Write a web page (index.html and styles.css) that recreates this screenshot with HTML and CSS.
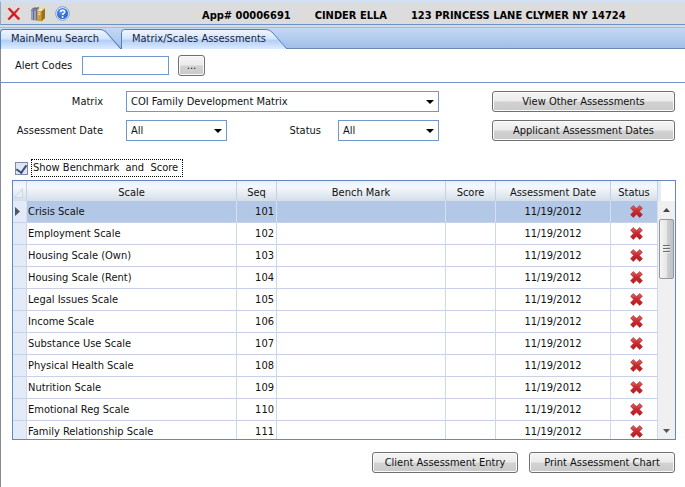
FILE: index.html
```html
<!DOCTYPE html>
<html lang="en">
<head>
<meta charset="utf-8">
<title>Matrix/Scales Assessments</title>
<link rel="stylesheet" href="styles.css">
</head>
<body>
<svg class="defs" width="0" height="0" aria-hidden="true">
  <defs>
    <linearGradient id="tabFill" x1="0" y1="0" x2="0" y2="1"><stop offset="0" stop-color="#f0f6ff"/><stop offset=".48" stop-color="#d3e4fb"/><stop offset=".55" stop-color="#b3cff5"/><stop offset="1" stop-color="#dcebff"/></linearGradient>
    <linearGradient id="crossFill" x1="0" y1="0" x2="0" y2="1"><stop offset="0" stop-color="#e46a6a"/><stop offset=".45" stop-color="#c92a2e"/><stop offset="1" stop-color="#b81a20"/></linearGradient>
    <radialGradient id="helpFill" cx=".4" cy=".3" r=".8"><stop offset="0" stop-color="#5d9bf5"/><stop offset="1" stop-color="#1b56c6"/></radialGradient>
    <symbol id="cross" viewBox="0 0 13 13"><path d="M3.2.6 6.5 3.6 9.8.6 12.3 3.2 9.3 6.4 12.4 9.7 9.8 12.4 6.5 9.3 3.2 12.4.6 9.7 3.7 6.4.7 3.2Z" fill="url(#crossFill)" stroke="#a92a2e" stroke-width=".7" stroke-linejoin="round"/></symbol>
  </defs>
</svg>
<header class="toolbar">
  <div class="tools">
    <button class="tool" aria-label="Close"><svg width="14" height="14" viewBox="0 0 14 14"><path d="M1 1.8 2.6 1 7 5.4 11.3 1 12.4 1.6 8.2 6.7 12.9 11.6 11.4 12.9 6.9 8.3 2 13 .9 11.8 5.4 6.8Z" fill="#d8141c" stroke="#d8141c" stroke-width=".5"/></svg></button>
    <button class="tool" aria-label="Records"><svg width="16" height="16" viewBox="0 0 16 16"><path d="M1 4 4 1 9 1 9 4 9 15 1 14Z" fill="#9a9bc0"/><path d="M1 4 6 4 9 1M3.5 4V14M6.5 4V14M2.5 2.5H8" fill="none" stroke="#65668f" stroke-width=".9"/><path d="M7 5 10.5 2 15 2.4 15 12 11.5 15.2 7 15Z" fill="#c99d38"/><path d="M7 5 10.5 2 15 2.4 11.5 5.3Z" fill="#f2e6a9"/><path d="M11.5 5.3 15 2.4V12L11.5 15.2Z" fill="#98701f"/><path d="M8.3 6.8H10.3M8.3 8.5H10.3" stroke="#f8e9a8"/></svg></button>
    <button class="tool" aria-label="Help"><svg width="15" height="15" viewBox="0 0 15 15"><circle cx="7.5" cy="7.5" r="6.8" fill="#f1f6ff" stroke="#5c8bd8" stroke-width=".8"/><circle cx="7.5" cy="7.5" r="5.6" fill="url(#helpFill)"/><path d="M5.5 6.1C5.5 3.5 9.7 3.5 9.7 6 9.7 7.5 7.6 7.4 7.6 9.1" fill="none" stroke="#fff" stroke-width="1.5"/><circle cx="7.6" cy="11" r=".95" fill="#fff"/></svg></button>
  </div>
  <div class="client"><span>App# 00006691</span><span>CINDER ELLA</span><span>123 PRINCESS LANE CLYMER NY 14724</span></div>
</header>
<nav class="tabs">
  <a class="tab tab-first" href="#"><svg viewBox="0 0 120 20" preserveAspectRatio="none" aria-hidden="true"><path d="M.5 20V3.5Q.5.5 3.5.5H99Q103 .5 106 4L120 20" fill="url(#tabFill)" stroke="#5080b8"/></svg><span>MainMenu Search</span></a>
  <a class="tab tab-second" href="#"><svg viewBox="0 0 166 20" preserveAspectRatio="none" aria-hidden="true"><path d="M.5 20V3.5Q.5.5 3.5.5H145Q149 .5 152 4L166 20" fill="url(#tabFill)" stroke="#5080b8"/></svg><span>Matrix/Scales Assessments</span></a>
</nav>
<main>
  <section class="alerts">
    <label for="alert">Alert Codes</label>
    <input id="alert" class="textbox" type="text">
    <button class="btn btn-more" aria-label="Browse alert codes">...</button>
  </section>
  <section class="filters">
    <label for="matrix">Matrix</label>
    <span class="combo combo-wide"><select id="matrix"><option>COI Family Development Matrix</option></select></span>
    <button class="btn view">View Other Assessments</button>
    <label for="date">Assessment Date</label>
    <span class="combo"><select id="date"><option>All</option></select></span>
    <label class="status-label" for="status">Status</label>
    <span class="combo"><select id="status"><option>All</option></select></span>
    <button class="btn view">Applicant Assessment Dates</button>
  </section>
  <div class="check">
    <input id="show" type="checkbox" checked>
    <label for="show">Show Benchmark&nbsp; and&nbsp; Score</label>
  </div>
  <section class="grid">
    <div class="viewport">
      <table>
        <colgroup><col class="c-mark"><col class="c-scale"><col class="c-seq"><col><col class="c-score"><col class="c-date"><col class="c-status"></colgroup>
        <thead><tr><th class="corner"><svg width="9" height="10" viewBox="0 0 9 10" aria-hidden="true"><path d="M.5 9.5 8.5.5V9.5Z" fill="#e6edf4" stroke="#c5d0db" stroke-width=".7"/></svg></th><th>Scale</th><th>Seq</th><th>Bench Mark</th><th>Score</th><th>Assessment Date</th><th>Status</th></tr></thead>
        <tbody>
          <tr class="current"><td class="mark"><svg width="5" height="9" viewBox="0 0 5 9" aria-hidden="true"><path d="M0 0 5 4.5 0 9Z" fill="#4c5666"/></svg></td><td>Crisis Scale</td><td class="seq">101</td><td></td><td></td><td class="mid">11/19/2012</td><td class="state"><svg class="x" role="img" aria-label="Incomplete"><use href="#cross"/></svg></td></tr>
          <tr><td class="mark"></td><td>Employment Scale</td><td class="seq">102</td><td></td><td></td><td class="mid">11/19/2012</td><td class="state"><svg class="x" role="img" aria-label="Incomplete"><use href="#cross"/></svg></td></tr>
          <tr><td class="mark"></td><td>Housing Scale (Own)</td><td class="seq">103</td><td></td><td></td><td class="mid">11/19/2012</td><td class="state"><svg class="x" role="img" aria-label="Incomplete"><use href="#cross"/></svg></td></tr>
          <tr><td class="mark"></td><td>Housing Scale (Rent)</td><td class="seq">104</td><td></td><td></td><td class="mid">11/19/2012</td><td class="state"><svg class="x" role="img" aria-label="Incomplete"><use href="#cross"/></svg></td></tr>
          <tr><td class="mark"></td><td>Legal Issues Scale</td><td class="seq">105</td><td></td><td></td><td class="mid">11/19/2012</td><td class="state"><svg class="x" role="img" aria-label="Incomplete"><use href="#cross"/></svg></td></tr>
          <tr><td class="mark"></td><td>Income Scale</td><td class="seq">106</td><td></td><td></td><td class="mid">11/19/2012</td><td class="state"><svg class="x" role="img" aria-label="Incomplete"><use href="#cross"/></svg></td></tr>
          <tr><td class="mark"></td><td>Substance Use Scale</td><td class="seq">107</td><td></td><td></td><td class="mid">11/19/2012</td><td class="state"><svg class="x" role="img" aria-label="Incomplete"><use href="#cross"/></svg></td></tr>
          <tr><td class="mark"></td><td>Physical Health Scale</td><td class="seq">108</td><td></td><td></td><td class="mid">11/19/2012</td><td class="state"><svg class="x" role="img" aria-label="Incomplete"><use href="#cross"/></svg></td></tr>
          <tr><td class="mark"></td><td>Nutrition Scale</td><td class="seq">109</td><td></td><td></td><td class="mid">11/19/2012</td><td class="state"><svg class="x" role="img" aria-label="Incomplete"><use href="#cross"/></svg></td></tr>
          <tr><td class="mark"></td><td>Emotional Reg Scale</td><td class="seq">110</td><td></td><td></td><td class="mid">11/19/2012</td><td class="state"><svg class="x" role="img" aria-label="Incomplete"><use href="#cross"/></svg></td></tr>
          <tr><td class="mark"></td><td>Family Relationship Scale</td><td class="seq">111</td><td></td><td></td><td class="mid">11/19/2012</td><td class="state"><svg class="x" role="img" aria-label="Incomplete"><use href="#cross"/></svg></td></tr>
        </tbody>
      </table>
    </div>
    <div class="scroll">
      <div class="head-end"></div>
      <div class="track">
        <svg width="7" height="4" viewBox="0 0 7 4" aria-hidden="true"><path d="M0 4 3.5 0 7 4Z" fill="#454545"/></svg>
        <div class="thumb"><i></i><i></i><i></i></div>
        <svg class="down" width="7" height="4" viewBox="0 0 7 4" aria-hidden="true"><path d="M0 0H7L3.5 4Z" fill="#555"/></svg>
      </div>
    </div>
  </section>
  <footer class="actions">
    <button class="btn act">Client Assessment Entry</button>
    <button class="btn act">Print Assessment Chart</button>
  </footer>
</main>
</body>
</html>
```
FILE: styles.css
```css
* { box-sizing: border-box; }
body { display: flex; flex-direction: column; min-height: 100vh; margin: 0; background: #fff; color: #111; }
body, button, input, select { font-family: "DejaVu Sans Condensed", "Noto Sans", sans-serif; font-size: 11px; line-height: 14px; }
.defs { position: absolute; }
.toolbar { display: flex; align-items: center; height: 25px; padding-left: 6px; background: #dcdcdc; border-top: 3px solid #d3e0f4; border-bottom: 1px solid #6a93cc; border-left: 1px solid #8fa9cc; }
.tools { display: flex; align-items: center; gap: 9px; width: 195px; }
.tool { display: flex; padding: 0; border: 0; background: none; }
.client { display: flex; gap: 24px; padding-top: 4px; font-weight: bold; white-space: nowrap; color: #000; }
.tabs { display: flex; height: 24px; padding-top: 4px; background: linear-gradient(#dcdcdc 0 2px, #b9b9b9 2px 3px, #c3d8f5 3px, #a3bfe8); border-bottom: 1px solid #6d88b4; }
.tab { position: relative; display: flex; align-items: center; height: 20px; color: #15233c; text-decoration: none; white-space: nowrap; }
.tab svg { position: absolute; inset: 0; width: 100%; height: 100%; }
.tab span { position: relative; padding-left: 11px; }
.tab-first { width: 121px; }
.tab-second { width: 166px; }
main { flex: 1; border-left: 1px solid #8a8a92; }
.alerts { display: flex; align-items: center; height: 34px; padding-left: 14px; border-bottom: 1px solid #6f93ca; }
.alerts label { width: 67px; }
.textbox { width: 87px; height: 19px; padding: 0 4px; border: 1px solid #7098cf; outline: 0; background: #fff; }
.btn { height: 21px; padding: 0 4px; border: 1px solid #707070; border-radius: 3px; background: linear-gradient(#f3f3f3 0 10%, #ebebeb 48%, #d2d2d2 52%, #cacaca); box-shadow: inset 0 0 0 1px #fafafa; color: #111; white-space: nowrap; }
.btn-more { width: 27px; margin-left: 9px; }
.filters { display: grid; grid-template-columns: 125px 101px minmax(80px, 1fr) 101px 236px; row-gap: 8px; align-items: center; padding: 8px 10px 0 0; }
.filters label { padding-right: 23px; text-align: right; white-space: nowrap; }
.filters .status-label { padding-right: 17px; }
.view { margin-left: 53px; }
.combo { position: relative; display: block; }
.combo-wide { grid-column: span 3; }
.combo select { appearance: none; display: block; width: 100%; height: 21px; padding: 0 16px 0 4px; border: 1px solid #7098cf; border-radius: 0; background: #fff; color: #111; }
.combo::after { content: ""; position: absolute; top: 9px; right: 5px; border: 4px solid transparent; border-top-color: #000; border-bottom: 0; pointer-events: none; }
.check { display: flex; align-items: center; gap: 3px; padding: 18px 0 3px 14px; }
.check input { appearance: none; display: grid; place-items: center; width: 13px; height: 13px; margin: 0; border: 1px solid #7b8ba8; background: #dfe6f0; }
.check input:checked::after { content: ""; width: 5px; height: 8px; margin-bottom: 2px; border: solid #3c4c86; border-width: 0 2px 2px 0; rotate: 35deg; }
.check label { padding: 1px 4px 1px 1px; border: 1px dotted #000; }
.grid { display: flex; height: 260px; margin: 0 9px 0 11px; border: 1px solid #6487c4; }
.viewport { flex: 1; overflow: hidden; }
table { width: 100%; table-layout: fixed; border-collapse: separate; border-spacing: 0; }
th { height: 20px; padding: 3px 0 0; border-right: 1px solid #c5d2e1; background: linear-gradient(#e6f1fb, #f4f8fc 30%, #d4dee9); font-weight: normal; white-space: nowrap; }
td { height: 22px; padding: 0 2px; border-right: 1px solid #cdd7ea; border-bottom: 1px solid #c8d2e6; white-space: nowrap; }
td:nth-child(2) { padding-left: 1px; }
.c-mark { width: 14px; }
.c-scale { width: 210px; }
.c-seq { width: 40px; }
.c-score { width: 50px; }
.c-date { width: 115px; }
.c-status { width: 47px; }
.corner svg { display: block; margin-left: 1px; }
.mark { background: #e2ebf7; }
.mark svg { display: block; }
.seq { text-align: right; }
.mid { text-align: center; }
.state { padding: 0 0 0 5px; text-align: center; }
.x { display: block; width: 13px; height: 13px; margin: 0 auto; }
.current td { background: #b3c7e7; border-right-color: #d4dff0; }
.current .mark { background: #e2ebf7; }
.scroll { display: flex; flex-direction: column; width: 17px; }
.head-end { height: 20px; border-left: 3px solid #e3ebf3; }
.track { flex: 1; display: flex; flex-direction: column; align-items: center; padding: 7px 1px 6px; background: #f0f0f0; }
.thumb { display: flex; flex-direction: column; align-items: center; justify-content: center; gap: 1px; width: 15px; height: 60px; margin-top: 7px; border: 1px solid #979797; border-radius: 2px; background: linear-gradient(90deg, #f5f5f5, #e6e6e8 50%, #cfd0d3 55%, #bfc0c4); }
.thumb i { width: 7px; height: 2px; background: #6c6c6c; border-bottom: 1px solid #eee; }
.down { margin-top: auto; }
.actions { display: flex; justify-content: flex-end; gap: 11px; padding: 12px 10px 0 0; }
.act { width: 146px; }
```
